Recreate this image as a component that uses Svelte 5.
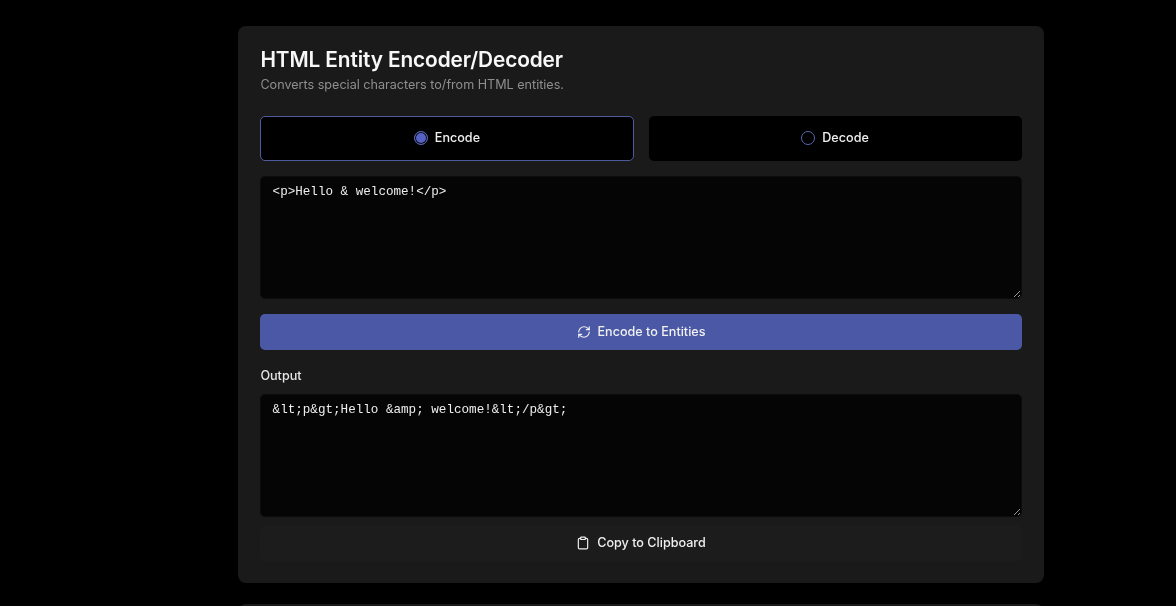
<script>
	let mode = $state('encode');
	let input = $state('<p>Hello & welcome!</p>');
	let output = $state('&lt;p&gt;Hello &amp; welcome!&lt;/p&gt;');
</script>

<main class="page">
	<section class="card">
		<h1>HTML Entity Encoder/Decoder</h1>
		<p class="sub">Converts special characters to/from HTML entities.</p>

		<div class="modes">
			<label class="mode" class:active={mode === 'encode'}>
				<input type="radio" bind:group={mode} value="encode" />
				<span class="dot"></span>
				<span class="mode-text">Encode</span>
			</label>
			<label class="mode" class:active={mode === 'decode'}>
				<input type="radio" bind:group={mode} value="decode" />
				<span class="dot"></span>
				<span class="mode-text">Decode</span>
			</label>
		</div>

		<textarea bind:value={input} spellcheck="false"></textarea>

		<button class="primary">
			<svg viewBox="0 0 24 24" width="14" height="14" fill="none" stroke="currentColor" stroke-width="2" stroke-linecap="round" stroke-linejoin="round">
				<path d="M3 12a9 9 0 0 1 9-9 9.75 9.75 0 0 1 6.74 2.74L21 8" />
				<path d="M21 3v5h-5" />
				<path d="M21 12a9 9 0 0 1-9 9 9.75 9.75 0 0 1-6.74-2.74L3 16" />
				<path d="M8 16H3v5" />
			</svg>
			Encode to Entities
		</button>

		<div class="label">Output</div>
		<textarea bind:value={output} spellcheck="false" readonly></textarea>

		<button class="secondary">
			<svg viewBox="0 0 24 24" width="14" height="14" fill="none" stroke="currentColor" stroke-width="2" stroke-linecap="round" stroke-linejoin="round">
				<rect x="8" y="2" width="8" height="4" rx="1" />
				<path d="M16 4h2a2 2 0 0 1 2 2v14a2 2 0 0 1-2 2H6a2 2 0 0 1-2-2V6a2 2 0 0 1 2-2h2" />
			</svg>
			Copy to Clipboard
		</button>
	</section>
	<div class="next"></div>
</main>

<style>
	:global(body) {
		background: #000;
		font-family: Inter, "Liberation Sans", sans-serif;
		overflow: hidden;
	}
	.page {
		height: 606px;
		overflow: hidden;
		box-sizing: border-box;
		padding: 26px 132px 0 238px;
		filter: saturate(1.001);
	}
	.card {
		background: #1a1a1a;
		border-radius: 8px;
		padding: 22px 22.4px;
		height: 557px;
		box-sizing: border-box;
		display: flex;
		flex-direction: column;
	}
	.next {
		margin-top: 21px;
		height: 40px;
		background: #1a1a1a;
		border-radius: 8px;
	}
	h1 {
		margin: 0;
		font-size: 20.8px;
		line-height: 24px;
		font-weight: 600;
		letter-spacing: -0.1px;
		color: #f8f8f8;
	}
	.sub {
		margin: 3px 0 0;
		font-size: 12.6px;
		line-height: 20px;
		color: #8f8f8f;
	}
	.modes {
		display: grid;
		grid-template-columns: 1fr 1fr;
		gap: 15px;
		margin-top: 21px;
	}
	.mode {
		height: 45px;
		box-sizing: border-box;
		display: flex;
		align-items: center;
		justify-content: center;
		gap: 7px;
		padding-bottom: 2px;
		background: #000;
		border: 1px solid transparent;
		border-radius: 5px;
		font-size: 12.6px;
		font-weight: 500;
		color: #f0f0f0;
		cursor: pointer;
	}
	.mode.active {
		border-color: #4f5a9e;
	}
	.mode input {
		display: none;
	}
	.dot {
		width: 14px;
		height: 14px;
		box-sizing: border-box;
		border: 1px solid #5a66ad;
		border-radius: 50%;
		margin-top: 1px;
	}
	.active .dot {
		background: #5763c4;
		box-shadow: inset 0 0 0 1px #000;
	}
	textarea {
		display: block;
		width: 100%;
		height: 123px;
		box-sizing: border-box;
		margin-top: 15px;
		padding: 8px 11.2px;
		background: #050505;
		border: 1px solid #0c0c0c;
		border-radius: 5px;
		color: #eee;
		font-family: "Liberation Mono", monospace;
		font-size: 12.6px;
		line-height: 15px;
		outline: none;
	}
	.label + textarea {
		margin-top: 10px;
	}
	button {
		display: flex;
		align-items: center;
		justify-content: center;
		gap: 7px;
		width: 100%;
		height: 36px;
		padding: 0 0 1px;
		border: none;
		border-radius: 5px;
		font-family: inherit;
		font-size: 12.6px;
		font-weight: 500;
		color: #f0f0f0;
		cursor: pointer;
	}
	.primary {
		margin-top: 15px;
		background: #4a58a6;
	}
	.secondary {
		margin-top: 8px;
		background: #1c1c1c;
	}
	.label {
		margin-top: 18px;
		font-size: 12.6px;
		line-height: 16px;
		font-weight: 500;
		color: #e6e6e6;
	}
</style>
